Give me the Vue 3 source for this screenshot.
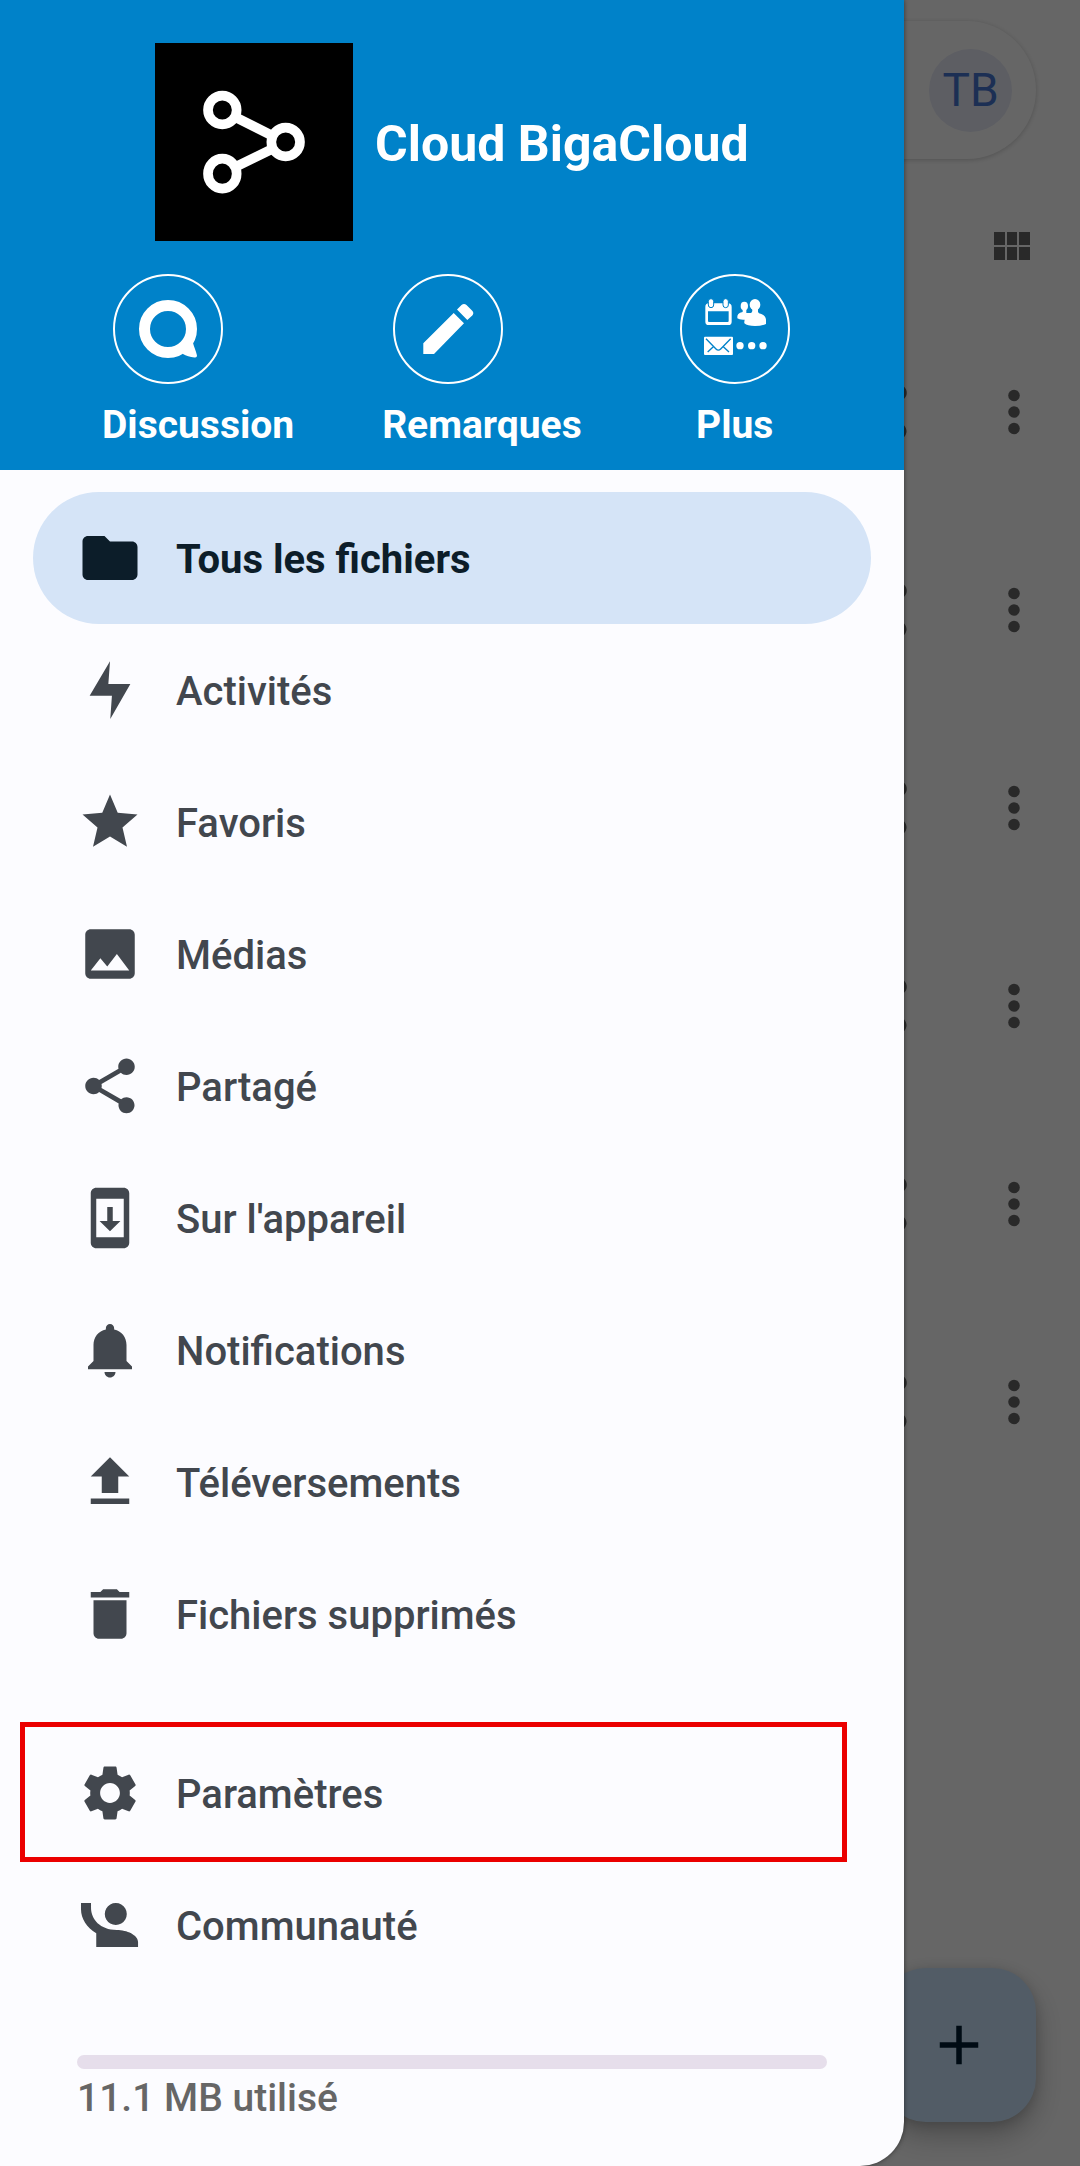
<script setup>
import { ref } from 'vue'

const active = ref('Tous les fichiers')

const mainItems = [
  { label: 'Tous les fichiers', path: 'M10 4H4c-1.1 0-2 .9-2 2v12c0 1.1.9 2 2 2h16c1.1 0 2-.9 2-2V8c0-1.1-.9-2-2-2h-8z' },
  { label: 'Activités', path: 'M12 1.5l-.6 8.3h8L12.1 22.5l.6-8.4H4.6z' },
  { label: 'Favoris', path: 'M12 17.27L18.18 21l-1.64-7.03L22 9.24l-7.19-.61L12 2 9.19 8.63 2 9.24l5.46 4.73L5.82 21z' },
  { label: 'Médias', path: 'M21 19V5c0-1.1-.9-2-2-2H5c-1.1 0-2 .9-2 2v14c0 1.1.9 2 2 2h14c1.1 0 2-.9 2-2zM8.5 13.5l2.5 3.01L14.5 12l4.5 6H5z' },
  { label: 'Partagé', path: 'M18 16.08c-.76 0-1.44.3-1.96.77L8.91 12.7c.05-.23.09-.46.09-.7s-.04-.47-.09-.7l7.05-4.11c.54.5 1.25.81 2.04.81 1.66 0 3-1.34 3-3s-1.34-3-3-3-3 1.34-3 3c0 .24.04.47.09.7L8.04 9.81C7.5 9.31 6.79 9 6 9c-1.66 0-3 1.34-3 3s1.34 3 3 3c.79 0 1.5-.31 2.04-.81l7.12 4.16c-.05.21-.08.43-.08.65 0 1.61 1.31 2.92 2.92 2.92s2.92-1.31 2.92-2.92-1.31-2.92-2.92-2.92z' },
  { label: "Sur l'appareil", path: 'M7 1h10c1.1 0 2 .9 2 2v18c0 1.1-.9 2-2 2H7c-1.1 0-2-.9-2-2V3c0-1.1.9-2 2-2zM7 5v14h10V5zM11 8h2v5.1h2.8L12 16.8l-3.8-3.7H11z' },
  { label: 'Notifications', path: 'M12 22c1.1 0 2-.9 2-2h-4c0 1.1.9 2 2 2zM18 16v-5.8c0-2.9-1.8-5.2-4.5-5.7V4c0-.83-.67-1.5-1.5-1.5s-1.5.67-1.5 1.5v.5C7.8 5 6 7.3 6 10.2V16l-2 2v1h16v-1z' },
  { label: 'Téléversements', path: 'M9 16h6v-6h4l-7-7-7 7h4zM5 18h14v2H5z' },
  { label: 'Fichiers supprimés', path: 'M6 19c0 1.1.9 2 2 2h8c1.1 0 2-.9 2-2V7H6zM19 4h-3.5l-1-1h-5l-1 1H5v2h14z' },
]

const secondaryItems = [
  { label: 'Paramètres', framed: true, path: 'M19.14 12.94c.04-.3.06-.61.06-.94 0-.32-.02-.64-.07-.94l2.03-1.58c.18-.14.23-.41.12-.61l-1.92-3.32c-.12-.22-.37-.29-.59-.22l-2.39.96c-.5-.38-1.03-.7-1.62-.94l-.36-2.54c-.04-.24-.24-.41-.48-.41h-3.84c-.24 0-.43.17-.47.41l-.36 2.54c-.59.24-1.13.57-1.62.94l-2.39-.96c-.22-.08-.47 0-.59.22L2.74 8.87c-.12.21-.08.47.12.61l2.03 1.58c-.05.3-.09.63-.09.94s.02.64.07.94l-2.03 1.58c-.18.14-.23.41-.12.61l1.92 3.32c.12.22.37.29.59.22l2.39-.96c.5.38 1.03.7 1.62.94l.36 2.54c.05.24.24.41.48.41h3.84c.24 0 .44-.17.47-.41l.36-2.54c.59-.24 1.13-.56 1.62-.94l2.39.96c.22.08.47 0 .59-.22l1.92-3.32c.12-.22.07-.47-.12-.61zM12 15.6c-1.98 0-3.6-1.62-3.6-3.6s1.62-3.6 3.6-3.6 3.6 1.62 3.6 3.6-1.62 3.6-3.6 3.6z' },
  { label: 'Communauté', path: 'M1.45 4H5.1v1.8c0 4 3.3 8 9.4 8 3.6 0 7.7 1.8 7.7 4.4V20H7v-5C3.6 13 1.45 9.8 1.45 6.2zM14.1 4a4 4 0 1 0 .01 0z' },
]

const files = [1, 2, 3, 4, 5, 6]
</script>

<template>
  <div class="app">
    <main class="screen">
      <div class="search">
        <button class="avatar" type="button">TB</button>
      </div>
      <div class="toolbar">
        <button class="icon-button" type="button" aria-label="Grille">
          <svg class="grid-icon" viewBox="0 0 36 28">
            <path d="M0 0h11v13H0zM13 0h10v13H13zM25 0h11v13H25zM0 15h11v13H0zM13 15h10v13H13zM25 15h11v13H25z" />
          </svg>
        </button>
      </div>
      <ul class="files">
        <li v-for="file in files" :key="file" class="file">
          <button class="icon-button" type="button" aria-label="Partager">
            <svg class="icon" viewBox="0 0 24 24"><path :d="mainItems[4].path" /></svg>
          </button>
          <button class="icon-button" type="button" aria-label="Options">
            <svg class="icon" viewBox="0 0 24 24">
              <circle cx="12" cy="6" r="2.1" /><circle cx="12" cy="12" r="2.1" /><circle cx="12" cy="18" r="2.1" />
            </svg>
          </button>
        </li>
      </ul>
      <button class="fab" type="button" aria-label="Ajouter">
        <svg class="icon" viewBox="0 0 24 24"><path d="M5 11h6V5h2v6h6v2h-6v6h-2v-6H5z" /></svg>
      </button>
    </main>

    <div class="scrim"></div>

    <aside class="drawer">
      <header class="header">
        <div class="brand">
          <svg class="logo" viewBox="0 0 594 594">
            <g stroke="#fff" stroke-width="29">
              <path d="M202 203L392 298L202 391" fill="none" />
              <circle cx="202" cy="201" r="43" />
              <circle cx="392" cy="297" r="43" />
              <ellipse cx="202" cy="392" rx="43" ry="45" />
            </g>
          </svg>
          <h1 class="title">Cloud BigaCloud</h1>
        </div>
        <div class="apps">
          <a class="app-link" href="#discussion">
            <span class="circle">
              <svg class="icon" viewBox="-33 -33 66 66">
                <circle r="23.5" fill="none" stroke="#fff" stroke-width="11" />
                <path d="M25 14C26 18 28 22 29 26.500Q29 29 26.500 28.500C22 28 18 27 15 25L14 18L20 12z" />
              </svg>
            </span>
            <span>Discussion</span>
          </a>
          <a class="app-link" href="#remarques">
            <span class="circle">
              <svg class="icon" viewBox="-33 -33 66 66">
                <path d="M-24.700 14.300V25H-14L16 -5.700L5.700 -16zM9 -19.500L13.500 -24Q16 -26.200 18.500 -24L24 -18.500Q26.500 -16 24.300 -13.500L19.300 -9z" />
              </svg>
            </span>
            <span>Remarques</span>
          </a>
          <a class="app-link centered" href="#plus">
            <span class="circle">
              <svg class="icon" viewBox="-99 -99 198 198">
                <path fill-rule="evenodd" d="M-79 -77h58q11 0 11 11v44q0 10 -10 10h-59q-10 0 -10 -10v-44q0 -11 10 -11zM-81 -53v29q0 3 3 3h56q3 0 3 -3v-29z" />
                <g stroke="#0082c9" stroke-width="3">
                  <rect x="-80" y="-91" width="16" height="27" rx="8" />
                  <rect x="-36" y="-91" width="16" height="27" rx="8" />
                </g>
                <ellipse cx="28" cy="-69" rx="11" ry="13" />
                <path d="M23 -60h11v12h14v20H24Q12 -28 7 -32Q5 -49 23 -51z" />
                <ellipse cx="60" cy="-73" rx="16" ry="17" />
                <path d="M52 -60h17v9q1 4 10 6q13 5 14 17v13Q80 -9 60 -9Q37 -9 28 -17Q26 -44 48 -48q5 -2 4 -12z" />
                <rect x="-93" y="23" width="87" height="55" rx="3" />
                <path d="M-87 29L-57 60Q-50 67 -43 60L-13 29M-82 69L-65 53M-18 69L-35 53" fill="none" stroke="#0082c9" stroke-width="4" />
                <circle cx="15" cy="50" r="11" /><circle cx="50" cy="50" r="11" /><circle cx="84" cy="50" r="11" />
              </svg>
            </span>
            <span>Plus</span>
          </a>
        </div>
      </header>

      <nav class="menu">
        <ul class="group">
          <li v-for="item in mainItems" :key="item.label">
            <a class="item" :class="{ active: item.label === active }" href="#" @click.prevent="active = item.label">
              <svg class="icon" viewBox="0 0 24 24"><path fill-rule="evenodd" :d="item.path" /></svg>
              <span class="label">{{ item.label }}</span>
            </a>
          </li>
        </ul>
        <ul class="group">
          <li v-for="item in secondaryItems" :key="item.label">
            <a class="item" :class="{ framed: item.framed }" href="#">
              <svg class="icon" viewBox="0 0 24 24"><path fill-rule="evenodd" :d="item.path" /></svg>
              <span class="label">{{ item.label }}</span>
            </a>
          </li>
        </ul>
      </nav>

      <footer class="quota">
        <progress id="quota" class="bar" value="0" max="100"></progress>
        <label for="quota">11.1 MB utilisé</label>
      </footer>
    </aside>
  </div>
</template>

<style>
body {
  background: #666;
}
</style>

<style scoped>
* {
  box-sizing: border-box;
}

.app {
  display: grid;
  min-height: 100vh;
  overflow: hidden;
  font-family: Roboto, "Noto Sans", sans-serif;
  font-size: 39px;
  line-height: 46px;
}

.screen,
.scrim,
.drawer {
  grid-area: 1 / 1;
}

button {
  display: flex;
  align-items: center;
  justify-content: center;
  padding: 0;
  border: 0;
  background: none;
  font: inherit;
  cursor: pointer;
}

ul {
  margin: 0;
  padding: 0;
  list-style: none;
}

a {
  color: inherit;
  text-decoration: none;
}

.icon {
  display: block;
  flex: none;
  width: 66px;
  height: 66px;
  fill: currentColor;
}

.screen {
  display: flex;
  flex-direction: column;
  padding: 21px 44px 44px;
  background: #fff;
}

.search {
  display: flex;
  align-items: center;
  justify-content: flex-end;
  height: 138px;
  padding-right: 24px;
  border-radius: 70px;
  background: #fff;
  box-shadow: 0 1px 5px rgba(0, 0, 0, 0.2);
}

.avatar {
  width: 83px;
  height: 83px;
  border-radius: 50%;
  background: #e8ebf8;
  color: #4675d2;
  font-size: 46px;
}

.toolbar {
  display: flex;
  justify-content: flex-end;
  height: 154px;
  padding: 73px 6px 0;
}

.toolbar .icon-button {
  align-self: flex-start;
}

.grid-icon {
  display: block;
  width: 36px;
  height: 28px;
  fill: #666;
}

.file {
  display: flex;
  align-items: center;
  justify-content: flex-end;
  gap: 66px;
  height: 198px;
  margin-right: -11px;
}

.file .icon-button {
  color: #666;
}

.fab {
  align-self: flex-end;
  width: 154px;
  height: 154px;
  margin-top: auto;
  border-radius: 44px;
  background: #cde7ff;
  color: #001d32;
  box-shadow: 0 14px 28px rgba(0, 0, 0, 0.25), 0 2px 12px rgba(0, 0, 0, 0.15);
}

.scrim {
  z-index: 1;
  background: rgba(0, 0, 0, 0.6);
}

.drawer {
  z-index: 2;
  display: flex;
  flex-direction: column;
  width: calc(100% - 176px);
  overflow: hidden;
  border-radius: 0 0 44px 0;
  background: #fcfcff;
  color: #42474e;
  font-weight: 500;
  box-shadow: 0 0 5px rgba(0, 0, 0, 0.5);
}

.header {
  display: flex;
  flex-direction: column;
  gap: 33px;
  padding: 43px 0 22px;
  background: #0082c9;
  color: #fff;
  font-weight: 700;
}

.brand {
  display: flex;
  align-items: center;
  gap: 22px;
  padding-left: 155px;
}

.logo {
  width: 198px;
  height: 198px;
  background: #000;
}

.title {
  margin: 0;
  padding-top: 4px;
  font-size: 50px;
  line-height: 58px;
}

.apps {
  display: flex;
  gap: 88px;
  padding-left: 102px;
}

.app-link {
  display: flex;
  flex-direction: column;
  gap: 18px;
  min-width: 130px;
}

.centered {
  align-items: center;
}

.circle {
  display: flex;
  align-items: center;
  justify-content: center;
  width: 110px;
  height: 110px;
  border: 2px solid #fff;
  border-radius: 50%;
}

.app-link:not(.centered) .circle {
  margin-left: 11px;
}

.menu {
  display: flex;
  flex-direction: column;
  gap: 47px;
  padding: 22px 33px 0;
}

.item {
  position: relative;
  display: flex;
  align-items: center;
  gap: 33px;
  height: 132px;
  padding-left: 44px;
  border-radius: 66px;
}

.label {
  padding-top: 4px;
  font-size: 40px;
}

.active {
  background: #d5e4f7;
  color: #0c1d29;
  font-weight: 700;
}

.framed::after {
  content: "";
  position: absolute;
  inset: -5px 24px -3px -13px;
  border: 5px solid #eb0000;
}

.quota {
  display: flex;
  flex-direction: column;
  gap: 6px;
  margin-top: auto;
  padding: 0 77px 45px;
  color: #666;
}

.bar {
  display: block;
  width: 100%;
  height: 14px;
  border: 0;
  appearance: none;
}

.bar::-webkit-progress-bar {
  border-radius: 7px;
  background: #e6deeb;
}

.bar::-webkit-progress-value {
  background: #0082c9;
}
</style>
